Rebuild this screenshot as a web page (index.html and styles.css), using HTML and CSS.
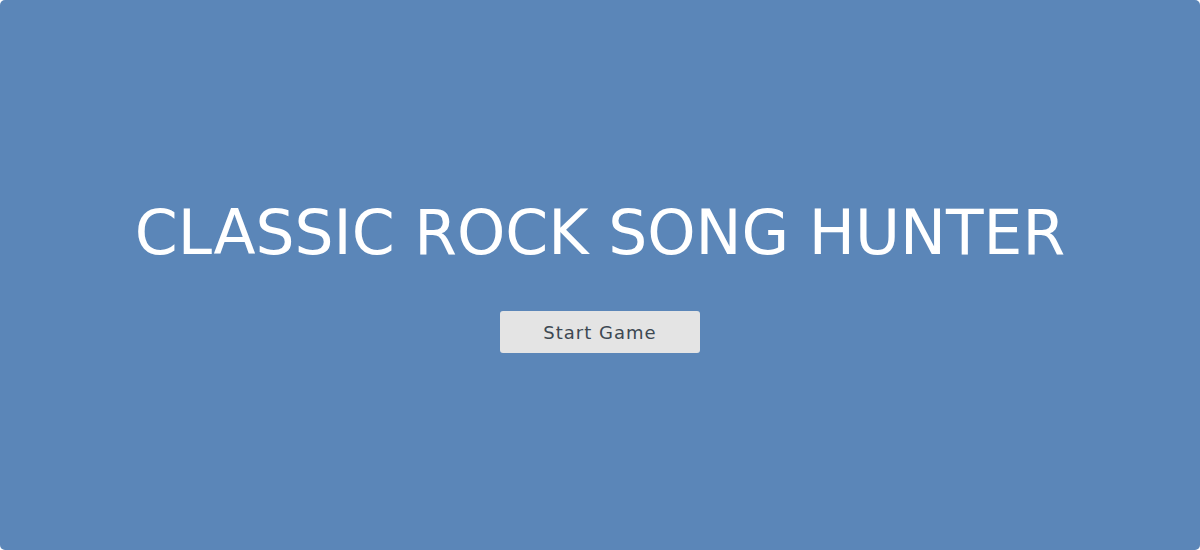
FILE: index.html
```html
<!DOCTYPE html>
<html>
<head>
<meta charset="utf-8">
<link rel="stylesheet" href="styles.css">
</head>
<body>
<main class="screen">
  <h1 class="title">CLASSIC ROCK SONG HUNTER</h1>
  <button class="start">Start Game</button>
</main>
</body>
</html>
```
FILE: styles.css
```css
html, body {
  margin: 0;
  padding: 0;
  background: #ffffff;
}
.screen {
  box-sizing: border-box;
  width: 1200px;
  height: 550px;
  background: #5b86b8;
  border-radius: 5px;
  display: flex;
  flex-direction: column;
  align-items: center;
  justify-content: center;
  padding-bottom: 4px;
}
.title {
  margin: 0;
  color: #ffffff;
  font-family: "DejaVu Sans", sans-serif;
  font-weight: normal;
  font-size: 61.5px;
  line-height: 80px;
  letter-spacing: 0;
}
.start {
  margin-top: 38px;
  width: 200px;
  height: 42px;
  border: none;
  border-radius: 3px;
  background: #e4e4e4;
  color: #3d4852;
  font-family: "DejaVu Sans", sans-serif;
  font-size: 18px;
  letter-spacing: 1px;
}
```
